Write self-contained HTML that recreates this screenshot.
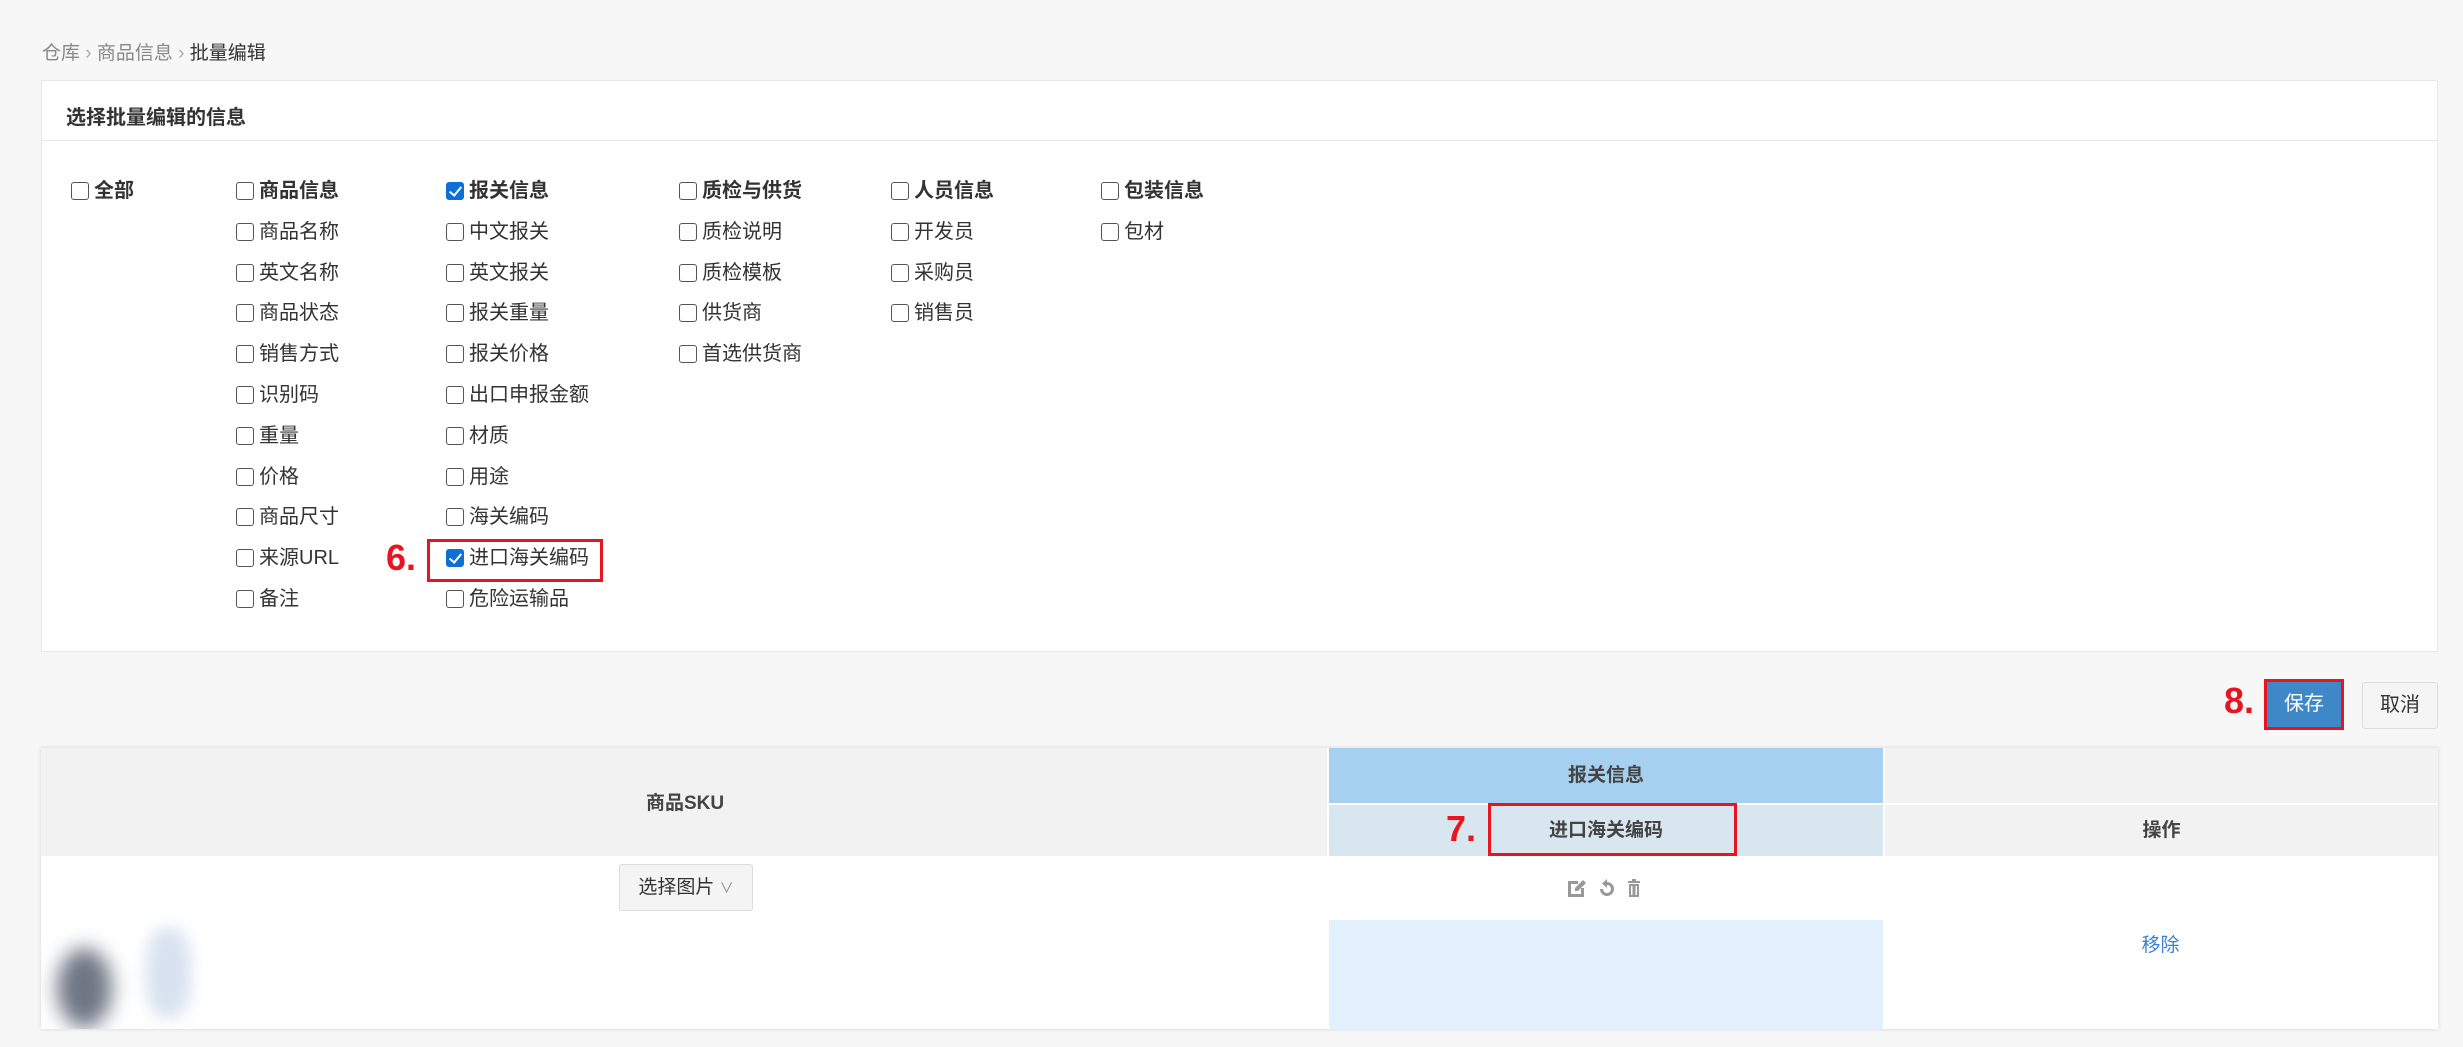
<!DOCTYPE html>
<html><head><meta charset="utf-8"><style>
*{box-sizing:border-box;margin:0;padding:0}
body{width:2463px;height:1047px;background:#f7f7f7;font-family:"Liberation Sans","Noto Sans CJK SC",sans-serif;color:#333;position:relative;overflow:hidden;font-size:20px}
.a{position:absolute;white-space:nowrap}
.panel{position:absolute;left:41px;top:80px;width:2397px;height:572px;background:#fff;border:1px solid #e8e8e8}
.cb{position:absolute;display:flex;align-items:center;font-size:20px;line-height:24px;color:#333}
.cb i{display:inline-block;width:18px;height:18px;border:1.5px solid #555;border-radius:3px;margin-right:5px;background:#fff;position:relative}
.cb i.on{background:#0d6fd8;border-color:#0d6fd8}
.cb i.on:after{content:"";position:absolute;left:5px;top:1px;width:5px;height:10px;border:solid #fff;border-width:0 2.5px 2.5px 0;transform:rotate(40deg)}
.b{font-weight:bold}
.red{color:#e8141f;font-weight:bold;font-size:36px;position:absolute}
.rbox{position:absolute;border:3px solid #e8141f}
</style></head><body>
<div class="a" style="left:42px;top:38px;font-size:19px;color:#888">仓库 <span style="color:#aaa">›</span> 商品信息 <span style="color:#aaa">›</span> <span style="color:#333">批量编辑</span></div>
<div class="panel">
 <div class="a b" style="left:24px;top:20px;font-size:20px">选择批量编辑的信息</div>
 <div style="position:absolute;left:0;right:0;top:59px;border-top:1px solid #e8e8e8"></div>
</div>
<div id="cbs"></div>
<div class="red" style="left:386px;top:537px">6.</div>
<div class="rbox" style="left:427px;top:539px;width:176px;height:43px"></div>

<div class="red" style="left:2224px;top:680px">8.</div>
<div class="a" style="left:2264px;top:679px;width:80px;height:51px;background:#3e88c8;border:3px solid #e8141f;color:#fff;font-size:20px;text-align:center;line-height:45px">保存</div>
<div class="a" style="left:2362px;top:682px;width:76px;height:47px;background:#f5f5f5;border:1px solid #ddd;border-radius:3px;font-size:20px;text-align:center;line-height:45px">取消</div>

<div class="a" style="left:41px;top:748px;width:2397px;height:281px;background:#fff;box-shadow:0 0 4px rgba(0,0,0,.15);overflow:hidden">
 <div class="a" style="left:0;top:0;width:1288px;height:108px;background:#f2f2f2;border-right:2px solid #fff"></div>
 <div class="a b" style="left:0;top:40px;width:1288px;text-align:center;font-size:19px;color:#444">商品SKU</div>
 <div class="a" style="left:1288px;top:0;width:554px;height:55px;background:#a6d0f0;text-align:center;line-height:55px;font-size:19px;font-weight:bold;color:#444">报关信息</div>
 <div class="a" style="left:1288px;top:55px;width:554px;height:53px;background:#d8e6f0;border-top:2px solid #fff;text-align:center;line-height:51px;font-size:19px;font-weight:bold;color:#444">进口海关编码</div>
 <div class="a" style="left:1842px;top:0;width:555px;height:55px;background:#f2f2f2;border-left:2px solid #fff"></div>
 <div class="a" style="left:1842px;top:55px;width:555px;height:53px;background:#f2f2f2;border-left:2px solid #fff;border-top:2px solid #fff;text-align:center;line-height:51px;font-size:19px;font-weight:bold;color:#444">操作</div>
 <div class="a" style="left:578px;top:116px;width:134px;height:47px;background:#f4f4f4;border:1px solid #ddd;border-radius:3px;text-align:center;line-height:45px;font-size:19px">选择图片 <span style="font-size:14px;color:#888">∨</span></div>
 <svg class="a" style="left:1526px;top:130px" width="80" height="20" viewBox="0 0 80 20" fill="#999">
  <path d="M1 3h10v3H4v10h10V10h3v9H1z"/><path d="M8 10l8-8 3 3-8 8H8z"/>
  <path d="M40 4a7 7 0 1 1-7 7h3a4 4 0 1 0 4-4v3l-5-4.5L40 1z"/>
  <path d="M61 3h12v2H61zM65 1h4v2h-4zM62 6h10v13H62z"/><path d="M64 8h1.5v9H64zM68.5 8h1.5v9h-1.5z" fill="#fff"/>
 </svg>
 <div class="a" style="left:1288px;top:172px;width:554px;height:109px;background:#e3f0fd"></div>
 <div class="a" style="left:16px;top:200px;width:55px;height:80px;border-radius:50%;background:#6e7684;filter:blur(10px)"></div>
 <div class="a" style="left:105px;top:180px;width:45px;height:90px;border-radius:40%;background:#d8e2f0;filter:blur(8px)"></div>
 <div class="a" style="left:1842px;top:182px;width:555px;text-align:center;font-size:19px;color:#3b7fd0">移除</div>
</div>
<div class="red" style="left:1446px;top:808px">7.</div>
<div class="rbox" style="left:1488px;top:803px;width:249px;height:53px"></div>

<script>
var cols=[[71,["全部"],[]],[236,["商品信息"],["商品名称","英文名称","商品状态","销售方式","识别码","重量","价格","商品尺寸","来源URL","备注"]],[446,["报关信息"],["中文报关","英文报关","报关重量","报关价格","出口申报金额","材质","用途","海关编码","进口海关编码","危险运输品"]],[679,["质检与供货"],["质检说明","质检模板","供货商","首选供货商"]],[891,["人员信息"],["开发员","采购员","销售员"]],[1101,["包装信息"],["包材"]]];
var h="";cols.forEach(function(c){var items=[c[1][0]].concat(c[2]);items.forEach(function(t,i){var on=(t=="报关信息"||t=="进口海关编码");h+='<div class="cb'+(i==0?' b':'')+'" style="left:'+c[0]+'px;top:'+(179+i*40.8)+'px"><i class="'+(on?'on':'')+'"></i>'+t+'</div>';});});
document.getElementById("cbs").innerHTML=h;
</script>
</body></html>
